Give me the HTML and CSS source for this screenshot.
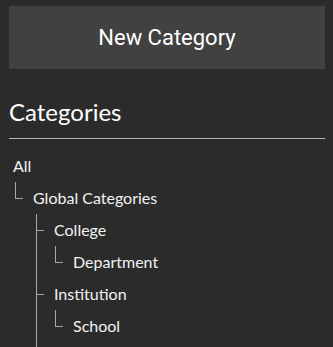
FILE: index.html
```html
<!DOCTYPE html>
<html lang="en">
<head>
  <meta charset="UTF-8">
  <meta name="viewport" content="width=device-width, initial-scale=1.0">
  <title>Categories</title>
  <link rel="stylesheet" href="styles.css">
</head>
<body>
  <div class="panel">
    <button class="new-btn" type="button">New Category</button>

    <h2 class="heading">Categories</h2>

    <!-- Category tree -->
    <div class="tree">
      <div class="label root">All</div>
      <ul class="branch first">
        <li class="last">
          <div class="row"><span class="tick"></span><span class="label">Global Categories</span></div>
          <ul class="branch">
            <li>
              <div class="row"><span class="tick"></span><span class="label">College</span></div>
              <ul class="branch">
                <li class="last">
                  <div class="row"><span class="tick"></span><span class="label">Department</span></div>
                </li>
              </ul>
            </li>
            <!-- more siblings follow below the fold -->
            <li class="more">
              <div class="row"><span class="tick"></span><span class="label">Institution</span></div>
              <ul class="branch">
                <li class="last">
                  <div class="row"><span class="tick"></span><span class="label">School</span></div>
                </li>
              </ul>
            </li>
          </ul>
        </li>
      </ul>
    </div>
  </div>
</body>
</html>
```

FILE: styles.css
```css
/* Panel */
html, body {
  margin: 0;
  background-color: #2b2b2b;
  color: #f2f2f2;
  overflow: hidden;
}

.panel {
  padding: 6px 8px 0 9px;
}

.new-btn {
  display: block;
  width: 100%;
  height: 63px;
  padding: 0;
  border: none;
  background-color: #414141;
  color: #ffffff;
  font-family: Roboto, "Liberation Sans", sans-serif;
  font-size: 22px;
  cursor: pointer;
}

.heading {
  margin: 29px 0 0;
  padding-bottom: 12px;
  border-bottom: 1px solid #b4b4b4;
  font-family: Lato, "Liberation Sans", sans-serif;
  font-size: 24px;
  font-weight: normal;
  line-height: 28px;
  color: #ffffff;
}

/* Tree */
.tree {
  margin-top: 11px;
  padding-left: 4px;
  font-family: Lato, "Liberation Sans", sans-serif;
  font-size: 16px;
}

.label {
  display: block;
  height: 32px;
  line-height: 32px;
  white-space: nowrap;
}

.branch {
  list-style: none;
  margin: 0 0 0 18px;
  padding: 0;
}

.branch.first {
  margin-left: 2px;
}

.branch li {
  border-left: 1px solid #a8a8a8;
}

.branch li.last {
  border-left: none;
}

.branch li.more {
  padding-bottom: 32px;
}

.row {
  display: flex;
  align-items: flex-start;
}

.tick {
  flex: none;
  box-sizing: border-box;
  width: 7px;
  height: 17px;
  margin-right: 10px;
  border-bottom: 1px solid #a8a8a8;
}

li.last > .row .tick {
  width: 8px;
  border-left: 1px solid #a8a8a8;
}

li.last > .branch {
  margin-left: 21px;
}
```
